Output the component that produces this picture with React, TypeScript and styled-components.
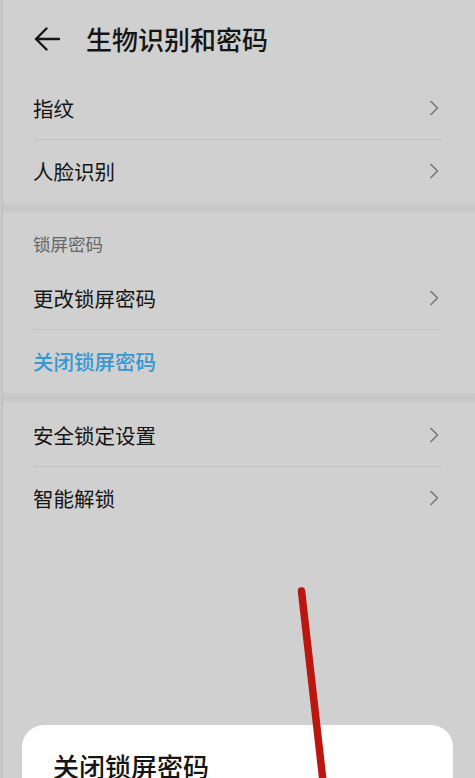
import React from 'react'
import styled, { createGlobalStyle } from 'styled-components'

const GlobalStyle = createGlobalStyle`
    html, body {
        margin: 0;
        padding: 0;
        background: #d0d0d0;
        font-family: "Noto Sans CJK SC", "Noto Sans", sans-serif;
    }
`

type Item = { label: string; arrow?: boolean; accent?: boolean }

const sections: { title?: string; items: Item[] }[] = [
    { items: [{ label: '指纹', arrow: true }, { label: '人脸识别', arrow: true }] },
    { title: '锁屏密码', items: [{ label: '更改锁屏密码', arrow: true }, { label: '关闭锁屏密码', accent: true }] },
    { items: [{ label: '安全锁定设置', arrow: true }, { label: '智能解锁', arrow: true }] },
]

const Chevron = () => (
    <svg width="12" height="16" viewBox="0 0 12 16" fill="none">
        <path d="M3 1.5 L9.5 8 L3 14.5" stroke="#7a7a7a" strokeWidth="1.7" strokeLinecap="round" strokeLinejoin="round" />
    </svg>
)

const BackArrow = () => (
    <svg width="26" height="24" viewBox="0 0 26 24" fill="none">
        <path d="M2 12 H25 M12.5 1.5 L2 12 L12.5 22.5" stroke="#151515" strokeWidth="2.4" strokeLinecap="round" strokeLinejoin="round" />
    </svg>
)

export default function App() {
    return (
        <>
            <GlobalStyle />
            <Page>
                <Header>
                    <BackArrow />
                    <Title>生物识别和密码</Title>
                </Header>
                {sections.map((section, i) => (
                    <React.Fragment key={i}>
                        {i > 0 && <Band />}
                        <Section $last={i === sections.length - 1}>
                            {section.title && <SubTitle>{section.title}</SubTitle>}
                            {section.items.map((item, j) => (
                                <Row key={item.label} $divider={j < section.items.length - 1}>
                                    <Label $accent={item.accent}>{item.label}</Label>
                                    {item.arrow && <Chevron />}
                                </Row>
                            ))}
                        </Section>
                    </React.Fragment>
                ))}
                <Sheet>
                    <SheetTitle>关闭锁屏密码</SheetTitle>
                </Sheet>
                <Annotation width="475" height="778" viewBox="0 0 475 778">
                    <line x1="301.5" y1="591" x2="324" y2="790" stroke="#b9170f" strokeWidth="7.5" strokeLinecap="round" />
                </Annotation>
            </Page>
        </>
    )
}

const Page = styled.div`
    position: relative;
    display: flex;
    flex-direction: column;
    height: 778px;
    overflow: hidden;
    background: #d0d0d0;
    box-shadow: inset 2px 0 0 #c9c9c9, inset 3px 0 0 #bdbdbd;

    & > * {
        flex-shrink: 0;
    }
`
const Header = styled.header`
    display: flex;
    align-items: center;
    column-gap: 26px;
    height: 77px;
    padding: 0 0 0 34px;
    box-sizing: border-box;
`
const Title = styled.h1`
    margin: 0;
    font-size: 26px;
    font-weight: 500;
    line-height: 1;
    color: #151515;
    letter-spacing: 0;
`
const Section = styled.section<{ $last?: boolean }>`
    display: flex;
    flex-direction: column;
    padding-top: ${p => (p.$last ? '2px' : '0')};
`
const Band = styled.div`
    height: 9px;
    margin-left: 3px;
    background: linear-gradient(#cbcbcb, #c7c7c7 60%, #cacaca);
`
const SubTitle = styled.div`
    height: 55px;
    box-sizing: border-box;
    padding: 22px 33px 0;
    font-size: 17.5px;
    line-height: 20px;
    color: #666666;
`
const Row = styled.div<{ $divider?: boolean }>`
    display: flex;
    align-items: center;
    justify-content: space-between;
    height: 63px;
    margin: 0 33px;
    padding-right: 2px;
    box-sizing: border-box;
    border-bottom: 1px solid ${p => (p.$divider ? '#c3c3c3' : 'transparent')};
`
const Label = styled.span<{ $accent?: boolean }>`
    font-size: 20.5px;
    line-height: 1;
    font-weight: ${p => (p.$accent ? 500 : 400)};
    color: ${p => (p.$accent ? '#3598d2' : '#141414')};
`
const Sheet = styled.div`
    margin: 195px 22px 0;
    height: 220px;
    padding: 28px 31px 0;
    box-sizing: border-box;
    background: #ffffff;
    border-radius: 22px;
`
const SheetTitle = styled.div`
    font-size: 26px;
    font-weight: 500;
    line-height: 1;
    color: #151515;
`
const Annotation = styled.svg`
    position: absolute;
    top: 0;
    left: 0;
    pointer-events: none;
`
